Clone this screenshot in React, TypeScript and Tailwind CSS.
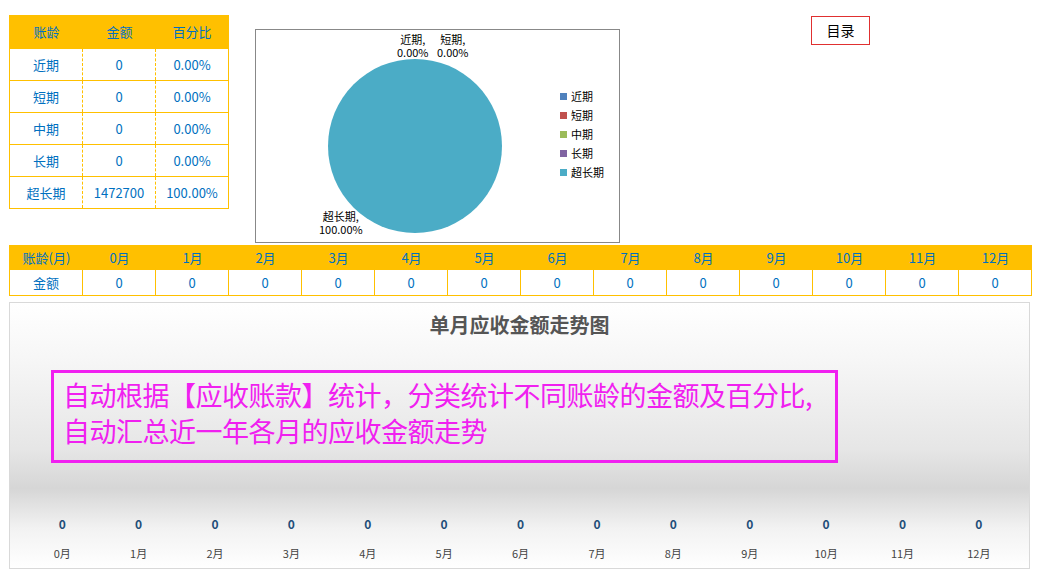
import React from "react";

const F = { fontFamily: '"Noto Sans CJK SC", "Liberation Sans", sans-serif' };
const rows = [["近期","0","0.00%"],["短期","0","0.00%"],["中期","0","0.00%"],["长期","0","0.00%"],["超长期","1472700","100.00%"]];
const months = ["0月","1月","2月","3月","4月","5月","6月","7月","8月","9月","10月","11月","12月"];
const legend = [["近期","#4f81bd"],["短期","#c0504d"],["中期","#9bbb59"],["长期","#8064a2"],["超长期","#4bacc6"]];

export default function App() {
  return (
    <div className="relative w-[1038px] h-[575px] bg-white text-[13px] overflow-hidden" style={F}>
      <div className="flex items-start">
        <div className="ml-[9px] mt-[15px] w-[220px] border border-[#ffc000]">
          <div className="grid grid-cols-[73px_73px_72px] h-[32px] bg-[#ffc000] text-[#0070c0] items-center text-center">
            <div>账龄</div><div>金额</div><div>百分比</div>
          </div>
          {rows.map((r, i) => (
            <div key={i} className="grid grid-cols-[73px_73px_72px] h-[32px] border-t border-[#ffc000] text-[#0070c0] items-center text-center leading-[28px]">
              <div className="h-full flex items-center justify-center border-r border-dashed border-[#ffc000]">{r[0]}</div>
              <div className="h-full flex items-center justify-center border-r border-dashed border-[#ffc000]">{r[1]}</div>
              <div>{r[2]}</div>
            </div>
          ))}
        </div>
        <div className="relative ml-[26px] mt-[29px] w-[365px] h-[214px] border border-[#888] text-[11px] text-black leading-[13px]">
          <svg className="absolute left-[71px] top-[28px]" width="176" height="176"><ellipse cx="88" cy="88" rx="87" ry="87" fill="#4bacc6" /></svg>
          <div className="absolute left-[141px] top-[3px] text-center">近期,<br/>0.00%</div>
          <div className="absolute left-[181px] top-[3px] text-center">短期,<br/>0.00%</div>
          <div className="absolute left-[63px] top-[180px] text-center">超长期,<br/>100.00%</div>
          <div className="absolute left-[304px] top-[60px] flex flex-col gap-[6px]">
            {legend.map(([t, c]) => (
              <div key={t} className="flex items-center gap-[4px]"><span className="w-[7px] h-[7px]" style={{ background: c }} />{t}</div>
            ))}
          </div>
        </div>
        <div className="ml-[191px] mt-[16px] w-[59px] h-[29px] border border-[#e03030] flex items-center justify-center text-[14px] text-black">目录</div>
      </div>
      <div className="ml-[9px] mt-[2px] w-[1023px] border border-[#ffc000] text-[#0070c0]">
        <div className="grid grid-cols-[repeat(14,73px)] h-[24px] bg-[#ffc000] items-center text-center">
          <div>账龄(月)</div>{months.map(m => <div key={m}>{m}</div>)}
        </div>
        <div className="grid grid-cols-[repeat(14,73px)] h-[25px] items-center text-center">
          <div className="h-full flex items-center justify-center border-r border-[#ffc000]">金额</div>
          {months.map(m => <div key={m} className="h-full flex items-center justify-center border-r border-[#ffc000]">0</div>)}
        </div>
      </div>
      <div className="ml-[9px] mt-[6px] w-[1021px] h-[267px] border border-[#d9d9d9] bg-[linear-gradient(to_bottom,#ffffff_0%,#f7f7f7_20%,#e6e6e6_55%,#d6d6d6_70%,#f2f2f2_85%,#ffffff_100%)] flex flex-col">
        <div className="text-center text-[20px] font-bold text-[#555] mt-[7px]">单月应收金额走势图</div>
        <div className="ml-[41px] mt-[30px] w-[787px] h-[93px] border-[3px] border-[#f020f0] text-[#f020f0] text-[27px] leading-[36px] pl-[9px] pt-[4px] tracking-[-0.5px] whitespace-nowrap">
          自动根据【应收账款】统计，分类统计不同账龄的金额及百分比,<br/>自动汇总近一年各月的应收金额走势
        </div>
        <div className="ml-[14px] mt-[52px] grid grid-cols-[repeat(13,76.4px)] text-center">
          {months.map(m => <div key={m} className="text-[12px] font-bold text-[#1f4e79]">0</div>)}
        </div>
        <div className="ml-[14px] mt-[12px] grid grid-cols-[repeat(13,76.4px)] text-center">
          {months.map(m => <div key={m} className="text-[11px] text-[#444]">{m}</div>)}
        </div>
      </div>
    </div>
  );
}
